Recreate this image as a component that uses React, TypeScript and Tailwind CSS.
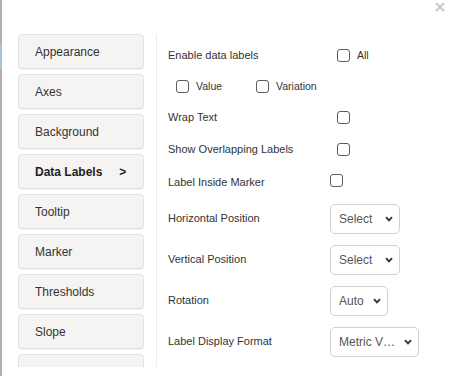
import React from "react";

const font = { fontFamily: '"Liberation Sans", Arial, sans-serif' };

function Checkbox() {
  return <div className="w-[13px] h-[13px] border border-[#5c5c5c] rounded-[3px] bg-white shrink-0" />;
}

function Chevron() {
  return (
    <svg width="8" height="6" viewBox="0 0 8 6" className="shrink-0">
      <path d="M1 1.2 L4 4.3 L7 1.2" fill="none" stroke="#333" strokeWidth="1.9" />
    </svg>
  );
}

function Select({ text, w }: { text: string; w: string }) {
  return (
    <div className={`${w} h-[30px] border border-[#d0d0d0] rounded-[5px] bg-white flex items-center justify-between pl-[8px] pr-[6px]`}>
      <span className="text-[12px] text-[#555]">{text}</span>
      <Chevron />
    </div>
  );
}

const menu = ["Appearance", "Axes", "Background", "Data Labels", "Tooltip", "Marker", "Thresholds", "Slope", ""];

export default function App() {
  return (
    <div className="w-[451px] h-[376px] bg-white flex relative overflow-hidden" style={font}>
      <div className="w-[2px] flex flex-col shrink-0">
        <div className="h-[43px] bg-[#b3aea8]" />
        <div className="h-[27px] bg-[#a6c3d3]" />
        <div className="flex-1 bg-[#b3aea8]" />
      </div>
      <svg width="10" height="10" viewBox="0 0 10 10" className="absolute left-[435px] top-[2px]">
        <path d="M1 1 L9 9 M9 1 L1 9" stroke="#cdcdcd" strokeWidth="2.4" />
      </svg>
      <div className="ml-[16px] mt-[34px] h-[333px] flex">
        <div className="w-[139px] border-r border-[#ebebeb] overflow-hidden flex flex-col gap-[5px]">
          {menu.map((m, i) => (
            <div
              key={i}
              className="w-[126px] h-[35px] shrink-0 bg-[#f5f4f2] border border-[#e3e1de] rounded-[4px] shadow-[0_1px_1px_rgba(0,0,0,0.06)] flex items-center pl-[16px] text-[12px] text-[#333]"
            >
              {m === "Data Labels" ? (
                <span className="font-bold text-[#222]">
                  Data Labels<span className="ml-[17px]">&gt;</span>
                </span>
              ) : (
                m
              )}
            </div>
          ))}
        </div>
        <div className="pl-[11px] pt-[6px] flex flex-col text-[11px] text-[#333]">
          <div className="h-[31px] flex items-center">
            <div className="w-[169px]">Enable data labels</div>
            <Checkbox />
            <span className="ml-[7px] text-[10.5px]">All</span>
          </div>
          <div className="h-[31px] flex items-center pl-[8px] text-[10.5px]">
            <div className="w-[80px] flex items-center">
              <Checkbox />
              <span className="ml-[7px]">Value</span>
            </div>
            <div className="flex items-center">
              <Checkbox />
              <span className="ml-[7px]">Variation</span>
            </div>
          </div>
          <div className="h-[31px] flex items-center">
            <div className="w-[169px]">Wrap Text</div>
            <Checkbox />
          </div>
          <div className="h-[33px] flex items-center">
            <div className="w-[169px]">Show Overlapping Labels</div>
            <Checkbox />
          </div>
          <div className="h-[32px] flex items-center">
            <div className="w-[162px]">Label Inside Marker</div>
            <div className="-mt-[3px]">
              <Checkbox />
            </div>
          </div>
          <div className="h-[41px] flex items-center">
            <div className="w-[162px]">Horizontal Position</div>
            <Select text="Select" w="w-[70px]" />
          </div>
          <div className="h-[41px] flex items-center">
            <div className="w-[162px]">Vertical Position</div>
            <Select text="Select" w="w-[70px]" />
          </div>
          <div className="h-[41px] flex items-center">
            <div className="w-[162px]">Rotation</div>
            <Select text="Auto" w="w-[58px]" />
          </div>
          <div className="h-[41px] flex items-center">
            <div className="w-[162px]">Label Display Format</div>
            <Select text="Metric V…" w="w-[89px]" />
          </div>
        </div>
      </div>
    </div>
  );
}
